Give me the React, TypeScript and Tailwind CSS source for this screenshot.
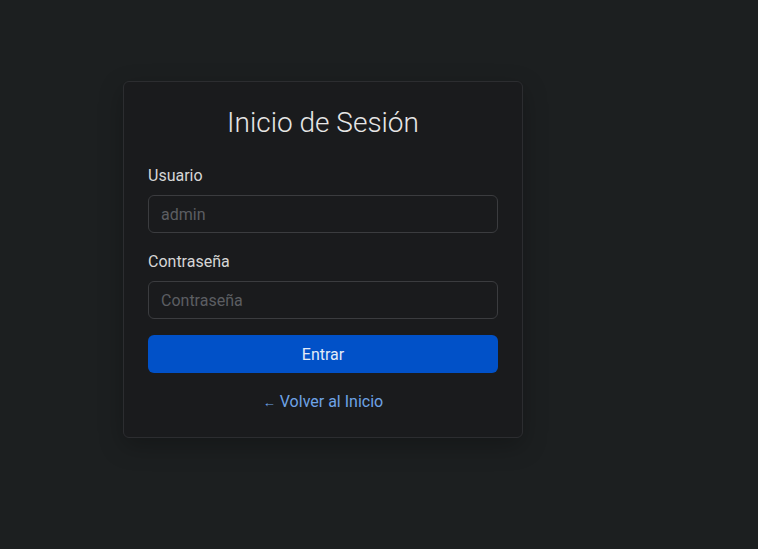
import { useState } from "react";

const App = () => {
    const [usuario, setUsuario] = useState<string>('')
    const [password, setPassword] = useState<string>('')

    return (
        <div className="min-h-[549px] w-full bg-[#1c1f20] pl-[123px] pt-[81px]" style={{ fontFamily: 'Roboto, "Noto Sans", sans-serif' }}>
            <div className="w-[400px] rounded-md border border-[#2c2d30] bg-[#1a1b1d] px-6 pt-6 pb-[23px] shadow-[0_8px_24px_rgba(0,0,0,0.25)]">
                <h1 className="pt-px text-center text-[28px] leading-[32px] font-light text-[#e6e6e6]">Inicio de Sesión</h1>
                <form className="mt-6" onSubmit={(e) => e.preventDefault()}>
                    <div className="mb-4">
                        <label className="mb-[7px] block pt-px text-base leading-6 text-[#d6d6d6]">Usuario</label>
                        <input
                            className="block h-[38px] w-full rounded-md border border-[#3b3c3f] bg-[#1a1b1d] px-3 pt-px text-base text-[#e6e6e6] outline-none placeholder:text-[#5c5e62]"
                            placeholder="admin"
                            value={usuario}
                            onChange={(e) => setUsuario(e.target.value)}
                        />
                    </div>
                    <div className="mb-4">
                        <label className="mb-[7px] block pt-px text-base leading-6 text-[#d6d6d6]">Contraseña</label>
                        <input
                            type="password"
                            className="block h-[38px] w-full rounded-md border border-[#3b3c3f] bg-[#1a1b1d] px-3 pt-px text-base text-[#e6e6e6] outline-none placeholder:text-[#5c5e62]"
                            placeholder="Contraseña"
                            value={password}
                            onChange={(e) => setPassword(e.target.value)}
                        />
                    </div>
                    <button type="submit" className="block h-[38px] w-full rounded-md bg-[#0151c8] pt-0.5 text-base text-[#e4ebf7]">Entrar</button>
                </form>
                <div className="mt-[17px] text-center leading-6">
                    <a href="#" className="text-base text-[#6ea3e6]"><span className="text-[13px]">←</span> Volver al Inicio</a>
                </div>
            </div>
        </div>
    )
}

export default App;
